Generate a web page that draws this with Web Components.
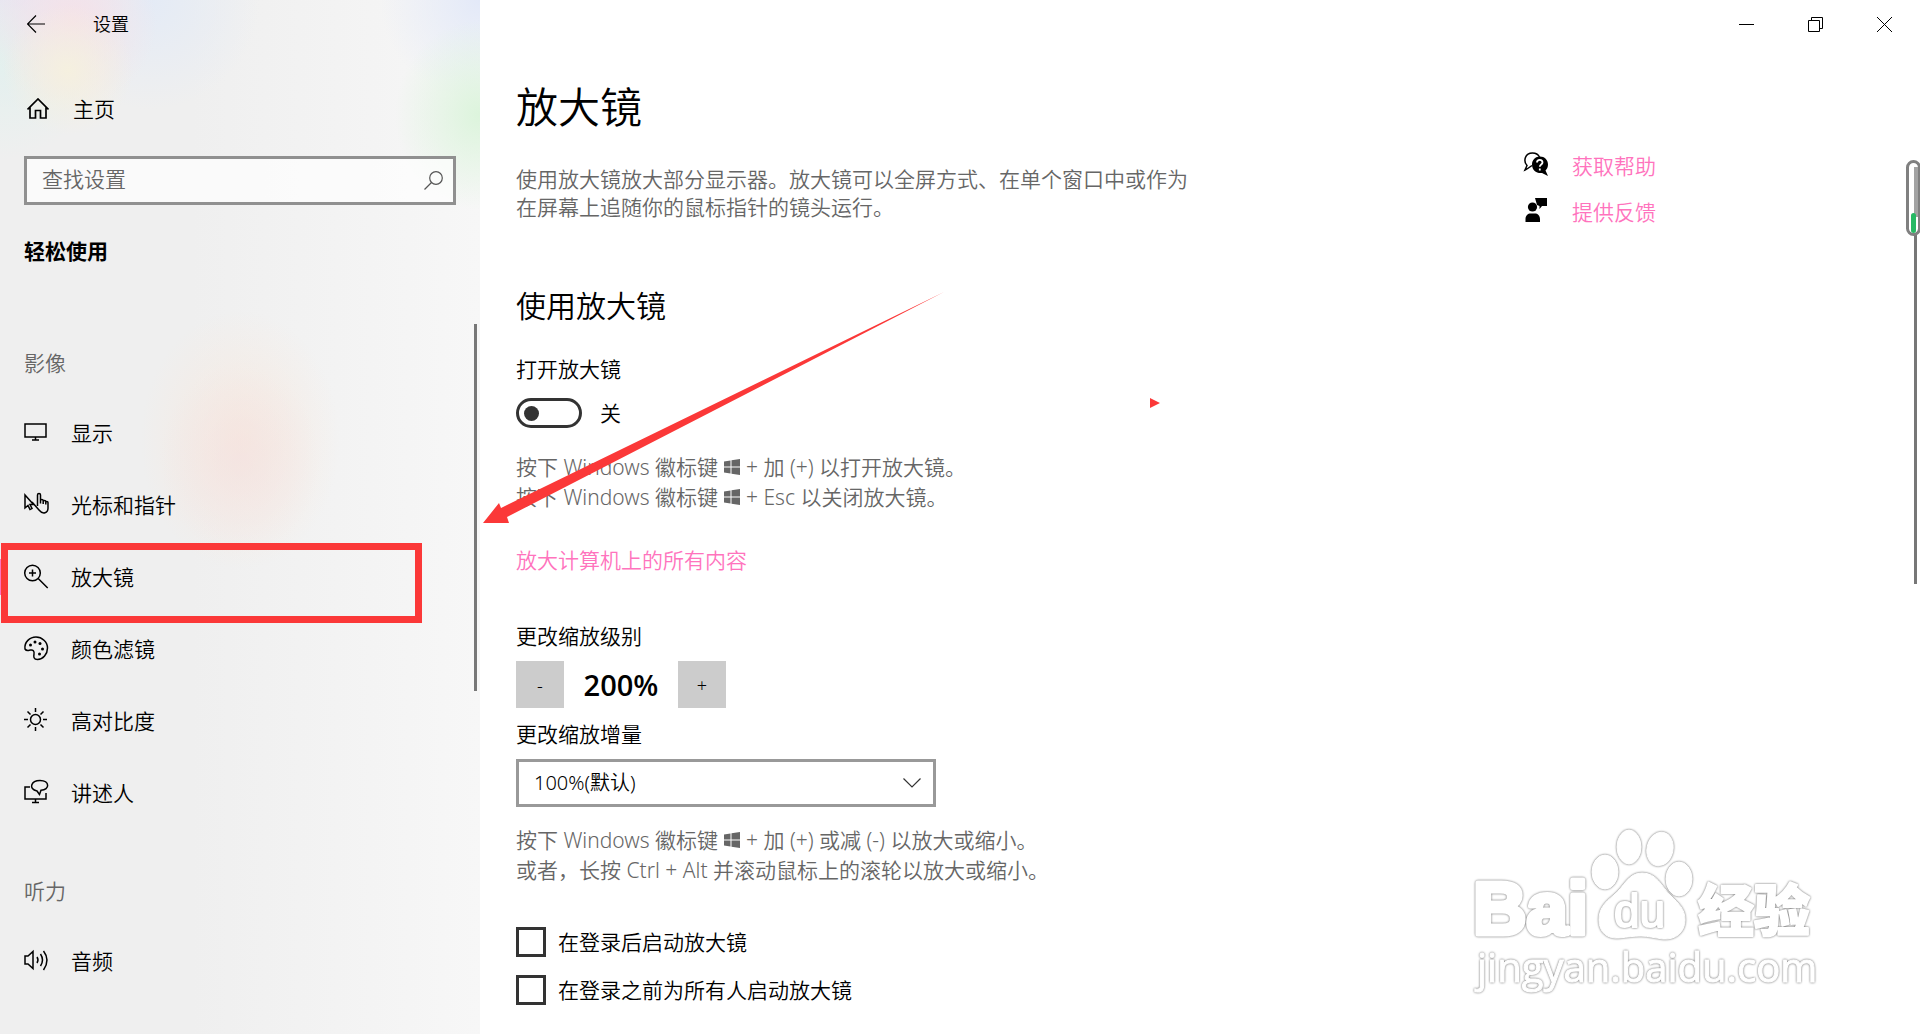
<!DOCTYPE html>
<html lang="zh-CN">
<head>
<meta charset="utf-8">
<title>设置</title>
<style>
  body {
    margin: 0;
    font: 350 21px/28px "Noto Sans", "Noto Sans CJK SC", sans-serif;
    color: #000;
    background: #fff;
    --muted: #666;
    --accent: #ff73bd;
    --mark: #fb3838;
  }
</style>
</head>
<body>
<settings-window>
  <settings-nav slot="nav">
    <nav-section heading="影像">
      <nav-item icon="display">显示</nav-item>
      <nav-item icon="cursor">光标和指针</nav-item>
      <nav-item icon="magnifier" current>放大镜</nav-item>
      <nav-item icon="palette">颜色滤镜</nav-item>
      <nav-item icon="sun">高对比度</nav-item>
      <nav-item icon="narrator">讲述人</nav-item>
    </nav-section>
    <nav-section heading="听力">
      <nav-item icon="audio">音频</nav-item>
    </nav-section>
  </settings-nav>
  <magnifier-page></magnifier-page>
  <help-link slot="aside" icon="help">获取帮助</help-link>
  <help-link slot="aside" icon="feedback">提供反馈</help-link>
</settings-window>
<page-watermark></page-watermark>
<page-arrow></page-arrow>

<script>
const ICONS = {
  display: `<path d="M1 3h21v13H1zM11.500 16v3M8 19h7"/>`,
  cursor: `<path d="M1 2v13l3-2.500 2 4 2-1-2-4h3.500zM8 9l7 8c4 5 9 3 9-2V9.500c0-1.500-2.200-1.500-2.200 0V8.500c0-1.500-2.600-1.500-2.600 0V7.500c0-1.500-2.700-1.500-2.700 0V2c0-2-3-2-3 0v11M16.500 7.500v3M19.200 8.500v2.500M21.800 9.500v2"/>`,
  magnifier: `<circle cx="8.500" cy="8" r="7.800"/><path d="M14.200 13.500l9.500 9.500M8.500 4.500v7M5 8h7"/>`,
  palette: `<path d="M1 12C0 5 6 0 12 0s11.500 5 11.500 11S19 22.500 13.500 22.500c-4 0-4-3-3.500-5.500.5-3-1-4.500-3.500-4C4 13.500 2.500 14.500 1 12z"/><g fill="currentColor" stroke="none"><circle cx="6.500" cy="8" r="1.500"/><circle cx="11" cy="5" r="1.500"/><circle cx="16" cy="6.500" r="1.500"/><circle cx="18.500" cy="12" r="1.500"/><circle cx="15.500" cy="17" r="1.500"/></g>`,
  sun: `<circle cx="11.500" cy="10.500" r="5"/><path d="M11.500-1v4M11.500 18v4M0 10.500h4M19 10.500h4M3.500 2.500l3 3M16.500 15.500l3 3M3.500 18.500l3-3M16.500 5.500l3-3"/>`,
  narrator: `<path d="M6 6H1v12h21v-6M11.500 18v3.500M8 21.500h7M15.500 13.500l-2.500-3.500C4 8 7-.5 16-.5c10 0 10 9.500 1 9.700z"/>`,
  audio: `<path d="M1 7h3l5-4.500v17L4 15H1zM13 8q2 3 0 6M16.500 5q4 6 0 12M19.500 2q7 9 0 19"/>`,
  help: `<path d="M8 13.500C6 15 3 17 1 18l2-4.500C-1 9 1 1 8.500 1c4 0 6 2 7 4"/><g fill="currentColor" stroke="none"><path d="M16 4.500c4.500 0 8 3.500 8 8 0 2.500-1 4.500-2.500 6L24 24l-6-3c-6 .5-10-3-10-8.500 0-4.500 3.500-8 8-8z"/></g><path stroke="#fff" stroke-width="1.800" d="M13 10.500c0-3.500 5.500-3.500 5.500 0 0 2-2.700 2-2.700 4.200M15.800 16.500v2"/>`,
  feedback: `<g fill="currentColor" stroke="none"><circle cx="8.500" cy="9" r="4.600"/><path d="M1.500 24v-3c0-3.500 2.500-5.500 5-5.500h4.500c2.500 0 5 2 5 5.500v3zM11 0h12v8h-5l-2.500 3V8L13 7z"/></g>`
};

const icon = name => `<svg width="24" height="24" viewBox="0 0 24 24" overflow="visible"
  fill="none" stroke="currentColor" stroke-width="1.500" aria-hidden="true">${ICONS[name]}</svg>`;

customElements.define(
  'settings-window',
  class extends HTMLElement {
    constructor() {
      super();
      const shadowRoot = this.attachShadow({ mode: 'open' });
      shadowRoot.innerHTML = `<style>
        :host {
          display: grid;
          grid-template-columns: 480px minmax(0, 1fr);
          height: 100vh;
          overflow: hidden;
        }
        main {
          position: relative;
        }
        .columns {
          display: grid;
          grid-template-columns: minmax(0, 1fr) 396px;
          padding-left: 36px;
        }
        aside {
          display: flex;
          flex-direction: column;
          gap: 18px;
          padding-top: 104px;
        }
        page-scrollbar {
          position: absolute;
          top: 160px;
          right: 0;
        }
        </style>
        <slot name="nav"></slot>
        <main>
          <window-controls></window-controls>
          <div class="columns">
            <slot></slot>
            <aside><slot name="aside"></slot></aside>
          </div>
          <page-scrollbar></page-scrollbar>
        </main>`;
    }
  }
);

customElements.define(
  'window-controls',
  class extends HTMLElement {
    constructor() {
      super();
      const shadowRoot = this.attachShadow({ mode: 'open' });
      shadowRoot.innerHTML = `<style>
        :host {
          display: flex;
          justify-content: flex-end;
          height: 48px;
          padding-right: 1px;
        }
        button {
          width: 69px;
          padding: 0;
          border: 0;
          background: none;
        }
        svg {
          display: block;
          margin: auto;
        }
        </style>
        <button aria-label="最小化"><svg width="15" height="15" fill="none" stroke="#000"><path d="M0 7.500h15"/></svg></button>
        <button aria-label="还原"><svg width="15" height="15" fill="none" stroke="#000"><path d="M.5 3.500h11v11H.5zM3.500 3.500v-3h11v11h-3"/></svg></button>
        <button aria-label="关闭"><svg width="15" height="15" fill="none" stroke="#000"><path d="M0 0l15 15M15 0L0 15"/></svg></button>`;
    }
  }
);

customElements.define(
  'page-scrollbar',
  class extends HTMLElement {
    constructor() {
      super();
      const shadowRoot = this.attachShadow({ mode: 'open' });
      shadowRoot.innerHTML = `<style>
        :host {
          display: block;
        }
        svg {
          display: block;
        }
        </style>
        <svg width="14" height="424" aria-hidden="true">
          <path fill="#777" d="M8 70h3v354H8z"/>
          <rect x="1.500" y="1.500" width="12" height="73" rx="6" fill="#fff" stroke="#808080" stroke-width="3"/>
          <path fill="#a3a3a3" d="M8 7h4v50H8z"/>
          <rect x="5" y="53" width="5" height="20" rx="2.500" fill="#27b964"/>
        </svg>`;
    }
  }
);

customElements.define(
  'settings-nav',
  class extends HTMLElement {
    constructor() {
      super();
      const shadowRoot = this.attachShadow({ mode: 'open' });
      shadowRoot.innerHTML = `<style>
        :host {
          display: block;
          position: relative;
          background:
            radial-gradient(ellipse 80px 95px at 240px 460px, #f3dfe088, #f3dfe000),
            radial-gradient(ellipse 100px 130px at 240px 440px, #f8e8dccc, #f8ebe300),
            radial-gradient(ellipse 85px 95px at 480px 115px, #dcf4dc, #dcf4dc00),
            radial-gradient(circle 100px at 480px 0, #e3e9f8, #e3e9f800),
            radial-gradient(circle 65px at 68px 70px, #f5f0df, #f5f0df00),
            radial-gradient(circle 85px at 72px 22px, #f5e2e8, #f5e2e800),
            radial-gradient(circle 100px at 0 60px, #e3f1ee, #e3f1ee00),
            radial-gradient(circle 110px at 20px 0, #e9dff5, #e9dff500),
            radial-gradient(circle 110px at 150px 0, #e4ebf6, #e4ebf600),
            linear-gradient(90deg, #efefef 40%, #f7f7f7 100%);
        }
        header {
          display: flex;
          align-items: center;
          height: 48px;
          padding-left: 27px;
          gap: 48px;
          font-size: 18px;
        }
        button {
          display: flex;
          padding: 0;
          border: 0;
          background: none;
        }
        .home {
          display: flex;
          align-items: center;
          gap: 24px;
          height: 48px;
          margin: 37px 0 23px 27px;
          color: inherit;
          text-decoration: none;
        }
        search-box {
          margin: 0 24px;
        }
        h2 {
          margin: 32px 24px 36px;
          font-size: 21px;
          font-weight: 700;
        }
        .thumb {
          position: absolute;
          top: 324px;
          right: 3px;
          width: 3px;
          height: 367px;
          background: #777;
        }
        </style>
        <header>
          <button aria-label="返回"><svg width="18" height="18" fill="none" stroke="#000" stroke-width="1.200"><path d="M0 9h18M9 .5L.5 9 9 17.500"/></svg></button>
          <span>设置</span>
        </header>
        <a class="home" href="#home">
          <svg width="22" height="22" fill="none" stroke="#000" stroke-width="1.700"><path d="M.5 11.500L11 1l10.500 10.500M3 9.500V20h5.500v-7.500h5V20H19V9.500"/></svg>
          主页
        </a>
        <search-box></search-box>
        <h2>轻松使用</h2>
        <slot></slot>
        <div class="thumb"></div>`;
    }
  }
);

customElements.define(
  'search-box',
  class extends HTMLElement {
    constructor() {
      super();
      const shadowRoot = this.attachShadow({ mode: 'open' });
      shadowRoot.innerHTML = `<style>
        :host {
          display: flex;
          align-items: center;
          height: 43px;
          padding: 0 10px 0 15px;
          border: 3px solid #909090;
          background: #ffffffa8;
        }
        input {
          flex: 1;
          min-width: 0;
          padding: 0 0 4px;
          border: 0;
          outline: 0;
          background: none;
          font: inherit;
        }
        input::placeholder {
          color: var(--muted);
        }
        </style>
        <input type="search" placeholder="查找设置" aria-label="查找设置">
        <svg width="19" height="19" fill="none" stroke="#555" stroke-width="1.200"><circle cx="12" cy="7" r="6.300"/><path d="M7.500 11.500L.5 18.500"/></svg>`;
    }
  }
);

customElements.define(
  'nav-section',
  class extends HTMLElement {
    constructor() {
      super();
      const shadowRoot = this.attachShadow({ mode: 'open' });
      shadowRoot.innerHTML = `<style>
        :host {
          display: block;
        }
        h3 {
          margin: 0;
          padding: 48px 24px 20px;
          font-size: 21px;
          font-weight: inherit;
          color: var(--muted);
        }
        </style>
        <h3>${this.getAttribute('heading')}</h3>
        <slot></slot>`;
    }
  }
);

customElements.define(
  'nav-item',
  class extends HTMLElement {
    constructor() {
      super();
      const shadowRoot = this.attachShadow({ mode: 'open' });
      shadowRoot.innerHTML = `<style>
        :host {
          display: block;
          position: relative;
        }
        a {
          display: flex;
          align-items: center;
          gap: 23px;
          height: 72px;
          padding-left: 24px;
          color: inherit;
          text-decoration: none;
        }
        :host([current])::before {
          content: "";
          position: absolute;
          top: 18px;
          left: 0;
          width: 6px;
          height: 36px;
          background: var(--accent);
        }
        :host([current])::after {
          content: "";
          position: absolute;
          inset: 2px 58px -10px 1px;
          border: 7px solid var(--mark);
        }
        </style>
        <a href="#${this.getAttribute('icon')}">${icon(this.getAttribute('icon'))}<slot></slot></a>`;
    }
  }
);

customElements.define(
  'help-link',
  class extends HTMLElement {
    constructor() {
      super();
      const shadowRoot = this.attachShadow({ mode: 'open' });
      shadowRoot.innerHTML = `<style>
        :host {
          display: block;
        }
        a {
          display: flex;
          gap: 24px;
          color: var(--accent);
          text-decoration: none;
        }
        svg {
          color: #000;
        }
        </style>
        <a href="#${this.getAttribute('icon')}">${icon(this.getAttribute('icon'))}<slot></slot></a>`;
    }
  }
);

customElements.define(
  'magnifier-page',
  class extends HTMLElement {
    constructor() {
      super();
      const shadowRoot = this.attachShadow({ mode: 'open' });
      shadowRoot.innerHTML = `<style>
        :host {
          display: block;
        }
        h1 {
          margin: 31px 0 30px;
          font-size: 42px;
          line-height: 56px;
          font-weight: inherit;
        }
        h2 {
          margin: 65px 0 29px;
          font-size: 30px;
          line-height: 40px;
          font-weight: inherit;
        }
        p {
          margin: 0;
          max-width: 690px;
          color: var(--muted);
        }
        .hint {
          line-height: 30px;
        }
        a {
          display: block;
          width: fit-content;
          margin: 34px 0 48px;
          color: var(--accent);
          text-decoration: none;
        }
        toggle-switch {
          margin-bottom: 24px;
        }
        zoom-stepper {
          margin-bottom: 12px;
        }
        zoom-increment {
          margin-bottom: 18px;
        }
        .checks {
          display: grid;
          gap: 18px;
          margin-top: 42px;
        }
        </style>
        <h1>放大镜</h1>
        <p>使用放大镜放大部分显示器。放大镜可以全屏方式、在单个窗口中或作为在屏幕上追随你的鼠标指针的镜头运行。</p>
        <h2>使用放大镜</h2>
        <toggle-switch label="打开放大镜">关</toggle-switch>
        <p class="hint">按下 Windows 徽标键 <win-key></win-key> + 加 (+) 以打开放大镜。<br>按下 Windows 徽标键 <win-key></win-key> + Esc 以关闭放大镜。</p>
        <a href="#all">放大计算机上的所有内容</a>
        <zoom-stepper label="更改缩放级别" value="200%"></zoom-stepper>
        <zoom-increment label="更改缩放增量"></zoom-increment>
        <p class="hint">按下 Windows 徽标键 <win-key></win-key> + 加 (+) 或减 (-) 以放大或缩小。<br>或者，长按 Ctrl + Alt 并滚动鼠标上的滚轮以放大或缩小。</p>
        <div class="checks">
          <check-option>在登录后启动放大镜</check-option>
          <check-option>在登录之前为所有人启动放大镜</check-option>
        </div>`;
    }
  }
);

customElements.define(
  'win-key',
  class extends HTMLElement {
    constructor() {
      super();
      const shadowRoot = this.attachShadow({ mode: 'open' });
      shadowRoot.innerHTML = `<style>
        :host {
          display: inline-block;
          width: 16px;
          height: 16px;
          margin-right: 1px;
        }
        svg {
          display: block;
        }
        </style>
        <svg width="16" height="16" fill="currentColor" aria-hidden="true"><path d="M0 2.500l6.500-1V7.500H0zM7.500 1.300L16 0v7.500H7.500zM0 8.500h6.500v6L0 13.500zM7.500 8.500H16V16l-8.500-1.300z"/></svg>`;
    }
  }
);

customElements.define(
  'toggle-switch',
  class extends HTMLElement {
    constructor() {
      super();
      const shadowRoot = this.attachShadow({ mode: 'open' });
      shadowRoot.innerHTML = `<style>
        :host {
          display: block;
        }
        div {
          display: flex;
          align-items: center;
          gap: 18px;
          height: 30px;
          margin-top: 15px;
        }
        label {
          display: block;
        }
        input {
          appearance: none;
          display: flex;
          align-items: center;
          width: 66px;
          height: 30px;
          margin: 0;
          padding: 0 5px;
          box-sizing: border-box;
          border: 3px solid #333;
          border-radius: 15px;
        }
        input::before {
          content: "";
          width: 15px;
          height: 15px;
          border-radius: 50%;
          background: #333;
        }
        input:checked {
          justify-content: flex-end;
        }
        </style>
        <label for="toggle">${this.getAttribute('label')}</label>
        <div><input id="toggle" type="checkbox" role="switch"><slot></slot></div>`;
    }
  }
);

customElements.define(
  'zoom-stepper',
  class extends HTMLElement {
    constructor() {
      super();
      const shadowRoot = this.attachShadow({ mode: 'open' });
      shadowRoot.innerHTML = `<style>
        :host {
          display: block;
        }
        div {
          display: flex;
          align-items: center;
          margin-top: 11px;
        }
        button {
          width: 48px;
          height: 47px;
          padding: 0;
          border: 0;
          background: #ccc;
          color: inherit;
          font: inherit;
          font-size: 18px;
        }
        output {
          width: 114px;
          text-align: center;
          font-family: "Open Sans", sans-serif;
          font-size: 29px;
          font-weight: 600;
        }
        </style>
        <label for="level">${this.getAttribute('label')}</label>
        <div>
          <button aria-label="缩小">-</button>
          <output id="level">${this.getAttribute('value')}</output>
          <button aria-label="放大">+</button>
        </div>`;
    }
  }
);

customElements.define(
  'zoom-increment',
  class extends HTMLElement {
    constructor() {
      super();
      const shadowRoot = this.attachShadow({ mode: 'open' });
      shadowRoot.innerHTML = `<style>
        :host {
          display: block;
        }
        div {
          display: grid;
          align-items: center;
          width: 420px;
          margin-top: 11px;
        }
        select, svg {
          grid-area: 1 / 1;
        }
        select {
          appearance: none;
          height: 48px;
          padding: 0 15px;
          border: 3px solid #999;
          border-radius: 0;
          background: #fff;
          color: #000;
          font: inherit;
          font-size: 20px;
        }
        svg {
          justify-self: end;
          margin-right: 15px;
          pointer-events: none;
        }
        </style>
        <label for="increment">${this.getAttribute('label')}</label>
        <div>
          <select id="increment"><option>100%(默认)</option></select>
          <svg width="18" height="10" fill="none" stroke="#333" stroke-width="1.200"><path d="M.5 .5L9 9l8.500-8.500"/></svg>
        </div>`;
    }
  }
);

customElements.define(
  'check-option',
  class extends HTMLElement {
    constructor() {
      super();
      const shadowRoot = this.attachShadow({ mode: 'open' });
      shadowRoot.innerHTML = `<style>
        :host {
          display: block;
        }
        label {
          display: flex;
          align-items: center;
          gap: 12px;
          width: fit-content;
        }
        input {
          appearance: none;
          width: 30px;
          height: 30px;
          margin: 0;
          box-sizing: border-box;
          border: 3px solid #333;
        }
        input:checked {
          background: #333;
        }
        </style>
        <label><input type="checkbox"><slot></slot></label>`;
    }
  }
);

customElements.define(
  'page-watermark',
  class extends HTMLElement {
    constructor() {
      super();
      const shadowRoot = this.attachShadow({ mode: 'open' });
      shadowRoot.innerHTML = `<style>
        :host {
          position: absolute;
          right: 90px;
          bottom: 32px;
          pointer-events: none;
        }
        svg {
          display: block;
          overflow: visible;
        }
        text, g {
          filter: drop-shadow(0 0 1px #0009);
        }
        .big {
          font: 700 74px "Liberation Sans", sans-serif;
          stroke-width: 5;
        }
        .du {
          font: 400 46px "Liberation Sans", sans-serif;
          stroke-width: 2;
        }
        .cjk {
          font: 900 56px "Noto Sans CJK SC", sans-serif;
          stroke-width: 2;
        }
        .url {
          font: 400 40px "Open Sans", sans-serif;
          stroke-width: 1;
        }
        </style>
        <svg width="360" height="176" fill="#fff" stroke="#fff" stroke-linejoin="round">
          <text class="big" x="3" y="108">Bai</text>
          <g>
            <ellipse cx="135" cy="46" rx="13" ry="17"/>
            <ellipse cx="159" cy="21" rx="12" ry="17"/>
            <ellipse cx="190" cy="23" rx="13" ry="17" transform="rotate(12 190 23)"/>
            <ellipse cx="209" cy="53" rx="13" ry="17"/>
            <path d="M172 47c-14 0-18 14-28 22-10 8-15 14-15 25 0 13 9 19 20 18 9-1 15-2 22-2s14 2 22 3c13 1 22-7 22-19 0-11-6-16-14-24-10-10-14-23-29-23z"/>
          </g>
          <text class="du" x="144" y="101">du</text>
          <text class="cjk" x="228" y="105">经验</text>
          <text class="url" x="7" y="156">jingyan.baidu.com</text>
        </svg>`;
    }
  }
);

customElements.define(
  'page-arrow',
  class extends HTMLElement {
    constructor() {
      super();
      const shadowRoot = this.attachShadow({ mode: 'open' });
      shadowRoot.innerHTML = `<style>
        :host {
          position: absolute;
          top: 291px;
          left: 483px;
          color: var(--mark);
          pointer-events: none;
        }
        svg {
          display: block;
        }
        </style>
        <svg width="678" height="233" fill="currentColor" aria-hidden="true">
          <path d="M0 232l16-20 2 5L461 1 24 226l2 6zM667 107l10 5-10 5z"/>
        </svg>`;
    }
  }
);
</script>
</body>
</html>
